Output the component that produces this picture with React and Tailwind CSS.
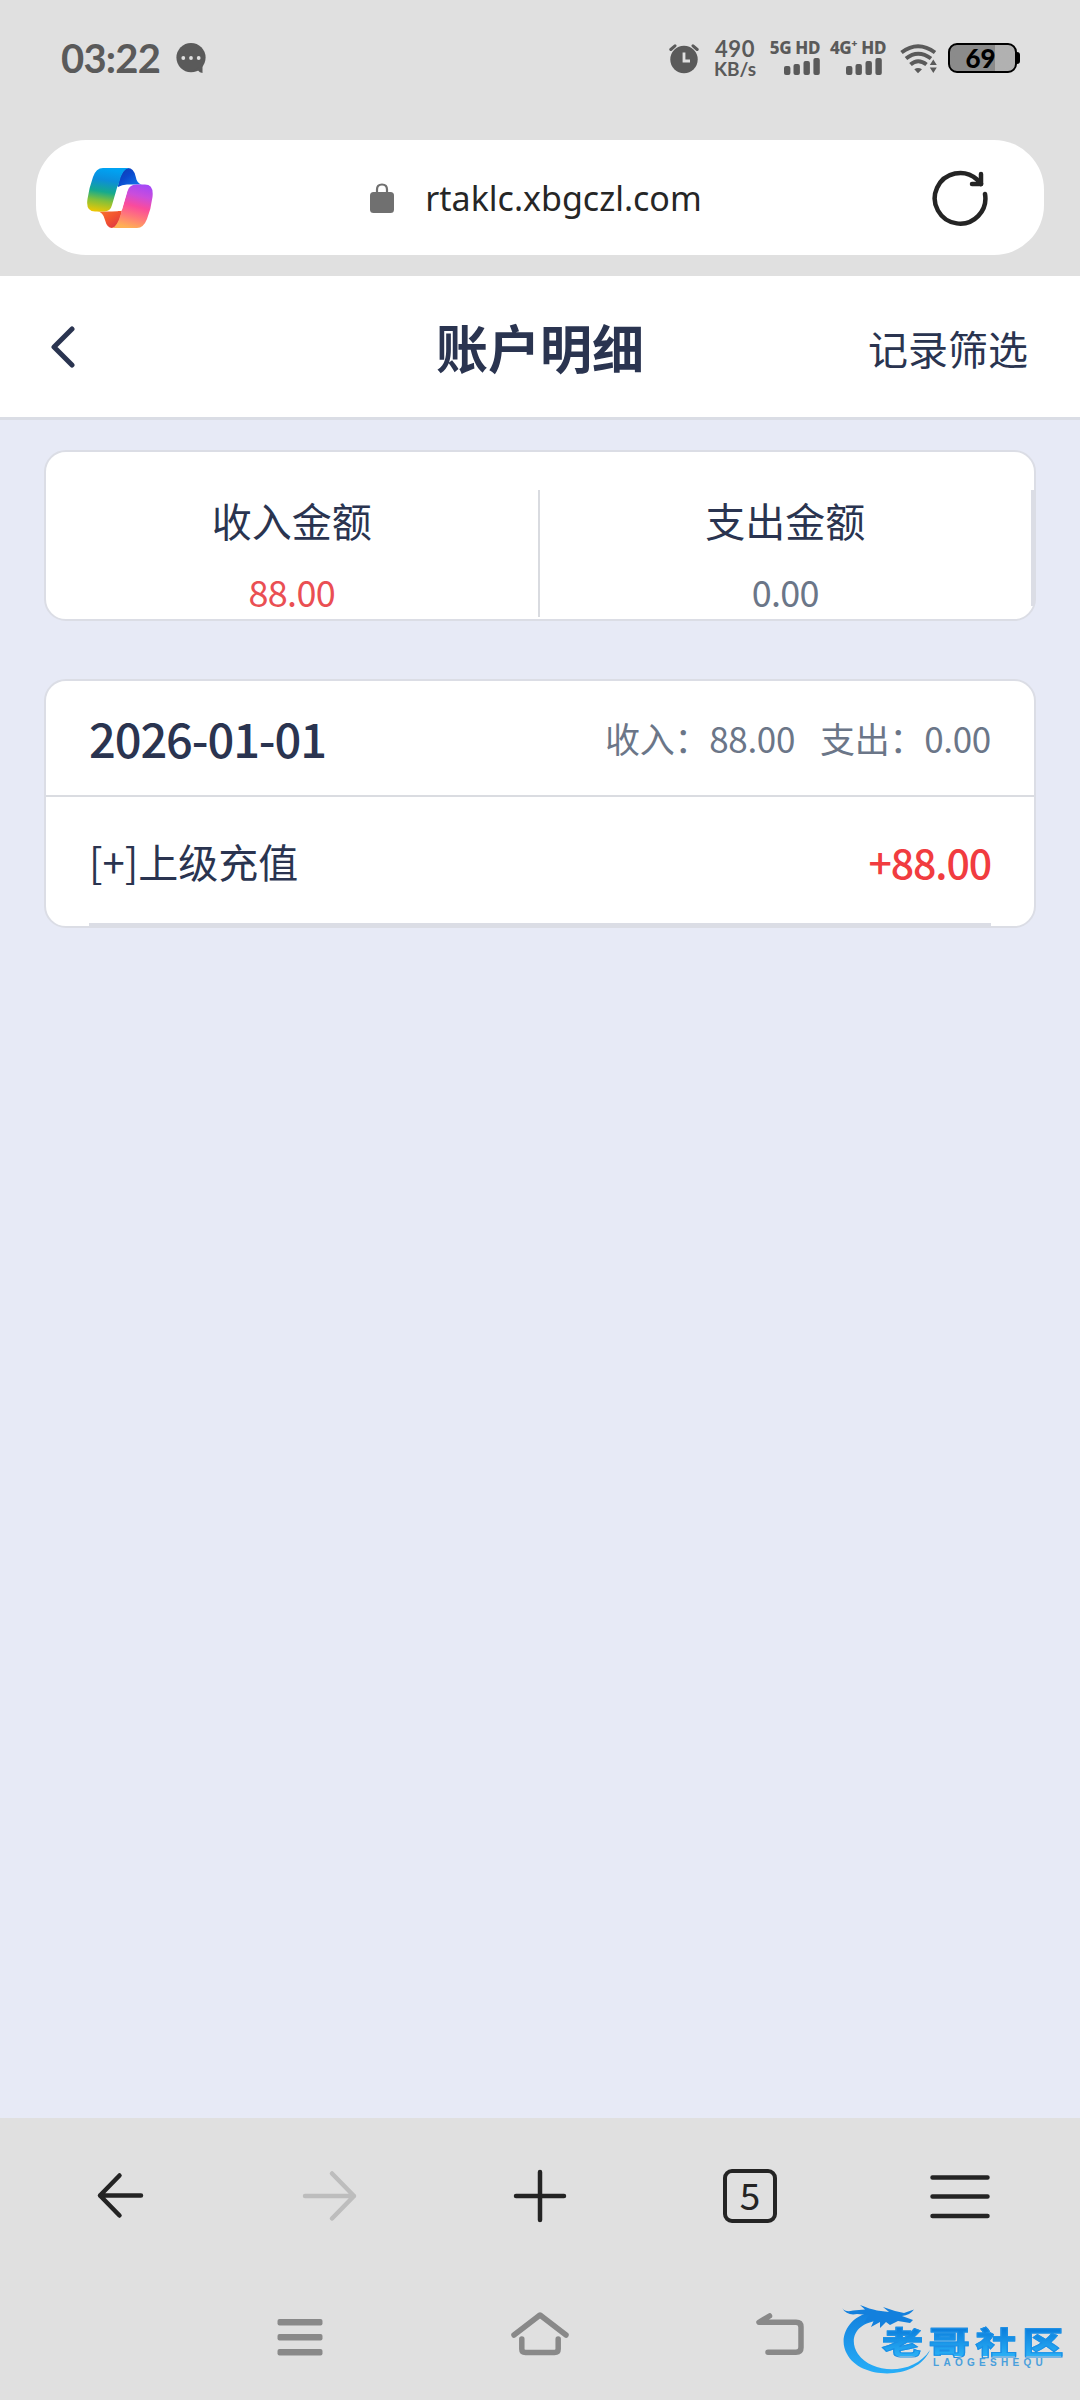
import React from 'react';

const days = [
  {
    date: '2026-01-01',
    income: '88.00',
    expense: '0.00',
    items: [{ id: 1, title: '[+]上级充值', amount: '+88.00' }]
  }
];

function SignalBars() {
  return (
    <svg viewBox="0 0 36 17" className="w-[36px] h-[17px] fill-[#5a5a5a]">
      <rect x="0" y="8" width="6.4" height="9" rx="2" />
      <rect x="9.5" y="6" width="6.4" height="11" rx="2" />
      <rect x="19.5" y="3" width="6.4" height="14" rx="2" />
      <rect x="29.4" y="0" width="6.4" height="17" rx="2" />
    </svg>
  );
}

function StatusBar() {
  return (
    <div className="h-[140px] flex items-start pt-[34px] pl-[61px] pr-[60px] text-[#5a5a5a]">
      <div className="h-[48px] flex items-center">
        <span className="w-[115px] text-[40px] leading-[48px] font-['Lato'] font-bold tracking-[-0.8px]">03:22</span>
        <svg viewBox="0 0 30 30" className="w-[30px] h-[30px]">
          <circle cx="15" cy="14.6" r="14.6" fill="#5a5a5a" />
          <path d="M17 28 L23 24 L26.5 22.5 V30 Q23.5 29.8 22 27.5Z" fill="#5a5a5a" />
          <circle cx="7.3" cy="15" r="1.9" fill="#e0e0e0" />
          <circle cx="15" cy="15" r="1.9" fill="#e0e0e0" />
          <circle cx="22.7" cy="15" r="1.9" fill="#e0e0e0" />
        </svg>
      </div>

      <div className="ml-auto flex items-start">
        <svg viewBox="0 0 30 30" className="w-[30px] h-[30px] mt-[10px] mr-[14px]" fill="none">
          <circle cx="15" cy="15.5" r="13.7" fill="#5a5a5a" />
          <path d="M1.8 5.5 L6 1.8 M28.2 5.5 L24 1.8" stroke="#5a5a5a" strokeWidth="3" strokeLinecap="round" />
          <path d="M15 8.5 V17 H21" stroke="#e0e0e0" strokeWidth="2.8" />
        </svg>

        <div className="w-[44px] mr-[13px] pt-[5px] flex flex-col items-center font-['Lato'] font-bold">
          <span className="text-[22px] leading-[20px] tracking-[0.6px]">490</span>
          <span className="text-[19px] leading-[19px] whitespace-nowrap">KB/s</span>
        </div>

        <div className="w-[50px] mr-[9px] pt-[6px] flex flex-col items-end">
          <span className="text-[17px] leading-[15px] font-['Noto_Sans'] font-extrabold whitespace-nowrap tracking-[-0.4px]">5G HD</span>
          <div className="mt-[3px]"><SignalBars /></div>
        </div>

        <div className="w-[57px] mr-[14px] pt-[6px] flex flex-col items-end">
          <span className="text-[17px] leading-[15px] font-['Noto_Sans'] font-extrabold whitespace-nowrap tracking-[-0.4px]">4G⁺ HD</span>
          <div className="mt-[3px] mr-[4px]"><SignalBars /></div>
        </div>

        <svg viewBox="0 0 37 30" className="w-[37px] h-[30px] mt-[10px] mr-[11px]" fill="none" stroke="#5a5a5a" strokeWidth="4">
          <path d="M1.5 8.5 Q18 -4 35 8.5" />
          <path d="M6 14.5 Q18 5 31 14.5" />
          <path d="M10.5 20.5 Q18 14 26.5 20.5" />
          <path d="M14.3 25.3 Q18 22.5 22 25.3 L18 29.2Z" fill="#5a5a5a" stroke="none" />
          <path d="M33.3 15.5 L36.8 21 H29.8Z M33.3 29 L29.8 23.5 H36.8Z" fill="#5a5a5a" stroke="none" />
        </svg>

        <div className="flex items-center mt-[9px]">
          <div className="w-[69px] h-[30px] rounded-[9px] border-2 border-black bg-linear-to-r from-[#8b8b8b] from-69% to-[#b1b1b1] to-69% flex items-center justify-center pr-[4px] text-black text-[26px] leading-[26px] font-['Lato'] font-black">
            69
          </div>
          <div className="w-[3px] h-[12px] rounded-r-sm bg-black" />
        </div>
      </div>
    </div>
  );
}

function CopilotLogo() {
  return (
    <svg viewBox="0 0 66 60" className="w-[66px] h-[60px]">
      <defs>
        <linearGradient id="leftRibbon" x1="0.3" y1="0" x2="0.15" y2="1">
          <stop offset="0" stopColor="#00a2f2" />
          <stop offset="0.25" stopColor="#0c8ddb" />
          <stop offset="0.52" stopColor="#15aa8e" />
          <stop offset="0.72" stopColor="#7fc03c" />
          <stop offset="1" stopColor="#f3c700" />
        </linearGradient>
        <linearGradient id="topFold" x1="0" y1="0" x2="1" y2="1">
          <stop offset="0" stopColor="#123cab" />
          <stop offset="0.4" stopColor="#0a48cc" />
          <stop offset="1" stopColor="#127ff0" />
        </linearGradient>
        <linearGradient id="rightRibbon" x1="0.7" y1="0" x2="0.45" y2="1">
          <stop offset="0" stopColor="#a648f5" />
          <stop offset="0.25" stopColor="#cb4ddb" />
          <stop offset="0.5" stopColor="#fa4b9c" />
          <stop offset="0.75" stopColor="#ff7a78" />
          <stop offset="1" stopColor="#ffb055" />
        </linearGradient>
        <linearGradient id="bottomFold" x1="0" y1="0" x2="1" y2="1">
          <stop offset="0" stopColor="#f97a30" />
          <stop offset="0.5" stopColor="#f2542f" />
          <stop offset="1" stopColor="#d9304a" />
        </linearGradient>
      </defs>
      <path d="M31 17.500 Q34 1 41 0 Q46.500 0 48.500 8 Q50 16 55 16.500 H40 Q35 16.500 31 19Z" fill="url(#topFold)" />
      <path d="M35 42 Q32 59 25 60 Q20 60 18 52 Q16 43.500 10 43.500 H25 Q31 43.500 35 42Z" fill="url(#bottomFold)" />
      <path d="M16 0 H42 Q35 1 32 15 Q30 19 28.500 25 L25 37 Q23.500 43.500 17 43.500 H8 Q-1.500 43.500 0.500 31 Q2 20 6 9 Q9 0 16 0Z" fill="url(#leftRibbon)" />
      <path d="M50 60 H25 Q30 59 33.500 47 L40.500 23 Q42.500 16.500 49 16.500 H58 Q67 16.500 65.500 29 Q64 41 60 51 Q56.500 60 50 60Z" fill="url(#rightRibbon)" />
      <path d="M34 18.500 H41.500 L34.500 43 H24.500 Q27 34 29.500 24 Q31 19.500 34 18.500Z" fill="#fff" />
    </svg>
  );
}

function AddressBar() {
  return (
    <div className="px-[36px] h-[136px]">
      <div className="h-[115px] rounded-[50px] bg-white flex items-center justify-between pl-[51px] pr-[56px]">
        <CopilotLogo />
        <div className="flex items-center ml-[-13px]">
          <svg viewBox="0 0 24 30" className="w-[24px] h-[30px] mr-[31px]">
            <path d="M7 11 V6.500 Q7 1.500 12 1.500 Q17 1.500 17 6.500 V11" fill="none" stroke="#707070" strokeWidth="2.2" />
            <rect x="0" y="9" width="24" height="21" rx="3.500" fill="#707070" />
          </svg>
          <span className="text-[34px] leading-[46px] pt-[1px] font-['Noto_Sans'] text-[#262626]">rtaklc.xbgczl.com</span>
        </div>
        <svg viewBox="0 0 56 56" className="w-[56px] h-[56px]" fill="none" stroke="#242424" strokeWidth="4.500" strokeLinecap="round" strokeLinejoin="round">
          <path d="M53 24 A25.300 25.300 0 1 1 45 9.500 L49 14" />
          <path d="M49 4 V14 H40" />
        </svg>
      </div>
    </div>
  );
}

function PageHeader() {
  return (
    <header className="h-[144px] bg-white border-b-3 border-[#dadde5] flex items-center justify-between pl-[50px] pr-[52px]">
      <svg viewBox="0 0 26 42" className="w-[26px] h-[42px]" fill="none" stroke="#2a3450" strokeWidth="5" strokeLinecap="round" strokeLinejoin="round">
        <path d="M22 3 L4 21 L22 39" />
      </svg>
      <h1 className="text-[52px] leading-[72px] font-bold ml-[136px]">账户明细</h1>
      <button className="text-[40px] leading-[56px] pt-[2px]">记录筛选</button>
    </header>
  );
}

function Summary() {
  return (
    <section className="h-[171px] rounded-[22px] border-2 border-[#dbdde5] bg-white flex pt-[38px]">
      <div className="flex-1 h-[127px] border-r-2 border-[#d9dbe0] flex flex-col items-center">
        <div className="mt-[2px] text-[40px] leading-[56px]">收入金额</div>
        <div className="mt-[17px] text-[36px] leading-[52px] tracking-[-0.7px] text-[#ea4f53]">88.00</div>
      </div>
      <div className="flex-1 h-[116px] border-r-3 border-[#dbdde5] flex flex-col items-center">
        <div className="mt-[2px] text-[40px] leading-[56px]">支出金额</div>
        <div className="mt-[17px] text-[36px] leading-[52px] tracking-[-0.7px] text-[#6b7688]">0.00</div>
      </div>
    </section>
  );
}

function DayCard({ day }) {
  return (
    <section className="mt-[58px] h-[249px] rounded-[22px] border-2 border-[#dbdde5] bg-white">
      <div className="h-[116px] px-[43px] border-b-2 border-[#dadce1] flex items-center justify-between">
        <span className="text-[47px] leading-[64px] font-medium tracking-[-1.1px]">{day.date}</span>
        <div className="flex gap-[25px] text-[35px] leading-[52px] tracking-[-0.3px] text-[#6b7688]">
          <span>收入：{day.income}</span>
          <span>支出：{day.expense}</span>
        </div>
      </div>
      {day.items.map((item) => (
        <div key={item.id} className="mx-[43px] h-[129px] border-b-3 border-[#dbdde5] pt-[1px] flex items-center justify-between">
          <span className="text-[40px] leading-[56px]">{item.title}</span>
          <span className="text-[41px] leading-[56px] font-medium tracking-[-1.1px] text-[#f13c40]">{item.amount}</span>
        </div>
      ))}
    </section>
  );
}

function BrowserToolbar() {
  return (
    <div className="h-[156px] px-[15px] grid grid-cols-5 place-items-center">
      <svg viewBox="0 0 60 60" className="w-[60px] h-[60px]" fill="none" stroke="#242424" strokeWidth="4.500" strokeLinecap="round" strokeLinejoin="round">
        <path d="M51 29.500 H10 M29.500 9.500 L10 29.500 L29.500 49.500" />
      </svg>
      <svg viewBox="0 0 60 60" className="w-[60px] h-[60px]" fill="none" stroke="#bdbdbd" strokeWidth="4.500" strokeLinecap="round" strokeLinejoin="round">
        <path d="M5 30 H54 M32 7.500 L54 30 L32 52.500" />
      </svg>
      <svg viewBox="0 0 60 60" className="w-[60px] h-[60px]" fill="none" stroke="#242424" strokeWidth="4.500" strokeLinecap="round">
        <path d="M6 30 H54 M30 6 V54" />
      </svg>
      <div className="w-[54px] h-[54px] rounded-[9px] border-4 border-[#242424] flex items-center justify-center pb-[4px] text-[37px] leading-[42px] text-[#242424]">5</div>
      <svg viewBox="0 0 60 60" className="w-[60px] h-[60px]" fill="none" stroke="#242424" strokeWidth="4.500" strokeLinecap="round">
        <path d="M2.500 11.500 H57.500 M2.500 30.500 H57.500 M2.500 50 H57.500" />
      </svg>
    </div>
  );
}

function Watermark() {
  return (
    <div className="absolute left-[840px] top-[2300px] w-[228px] h-[80px]">
      <svg viewBox="0 0 228 80" className="absolute inset-0 w-[228px] h-[80px]">
        <defs>
          <linearGradient id="dragon" x1="0" y1="0" x2="0" y2="1">
            <stop offset="0" stopColor="#1380dd" />
            <stop offset="1" stopColor="#27aef8" />
          </linearGradient>
        </defs>
        <path d="M34 12 C10 14 -3 37 7 54 C20 80 77 81 90 50 C73 76 32 74 18 54 C7 37 19 22 38 21Z" fill="url(#dragon)" />
        <path d="M2 8 Q6 13 13 10.500 L25 9.500 L20 5 Q30 9 37 10.500 L49 12 L43 7 L55 11 L64 13 L74 9.500 Q70 15 62 16 L73 20 L70 23 L58 21 L50 25 L46 22 L40 28 L40 22 L31 27 L34 20 L24 23 L29 15 L17 14 Q7 16 2 8Z" fill="#1380dd" />
      </svg>
      <div className="absolute left-[42px] top-[25px] text-[31px] leading-[31px] font-black tracking-[4.500px] whitespace-nowrap origin-left scale-x-132 [-webkit-text-stroke:1px_#1b90e6] text-transparent bg-clip-text bg-linear-to-b from-[#0877d9] to-[#2ab0f5]">老哥社区</div>
      <div className="absolute left-[93px] top-[57px] text-[10px] leading-[12px] tracking-[4.300px] font-['Liberation_Sans'] font-bold text-[#4a9fdc]">LAOGESHEQU</div>
    </div>
  );
}

function SystemNav() {
  return (
    <div className="h-[126px] px-[180px] pt-[32px] grid grid-cols-3 justify-items-center items-start">
      <svg viewBox="0 0 60 60" className="w-[60px] h-[60px]" fill="#898989">
        <rect x="7.500" y="13" width="45" height="6.500" rx="2" />
        <rect x="7.500" y="28" width="45" height="6.500" rx="2" />
        <rect x="7.500" y="43" width="45" height="6.500" rx="2" />
      </svg>
      <svg viewBox="0 0 60 60" className="w-[60px] h-[60px]" fill="none" stroke="#898989" strokeWidth="5.500" strokeLinecap="round" strokeLinejoin="round">
        <path d="M4 29 L30 9 L56 29" />
        <path d="M11.800 33 V43 Q11.800 46.500 15.500 46.500 H44.500 Q48.200 46.500 48.200 43 V33" />
      </svg>
      <svg viewBox="0 0 60 60" className="w-[60px] h-[60px]" fill="none" stroke="#898989" strokeWidth="5.500" strokeLinecap="round" strokeLinejoin="round">
        <path d="M19.500 10 L9 16.300 H46 Q51 16.300 51 21 V41.500 Q51 46.300 46 46.300 H18" />
      </svg>
    </div>
  );
}

function App() {
  return (
    <main className="relative w-[1080px] h-[2400px] overflow-hidden flex flex-col bg-[#e7eaf6] text-[#2a3450] font-['Noto_Sans_CJK_SC',sans-serif]">
      <div className="bg-[#e0e0e0]">
        <StatusBar />
        <AddressBar />
      </div>

      <PageHeader />

      <div className="flex-1 px-[44px] pt-[30px]">
        <Summary />
        {days.map((day) => (
          <DayCard key={day.date} day={day} />
        ))}
      </div>

      <footer className="bg-[#e0e0e0]">
        <BrowserToolbar />
        <SystemNav />
      </footer>

      <Watermark />
    </main>
  );
}

export default App;
